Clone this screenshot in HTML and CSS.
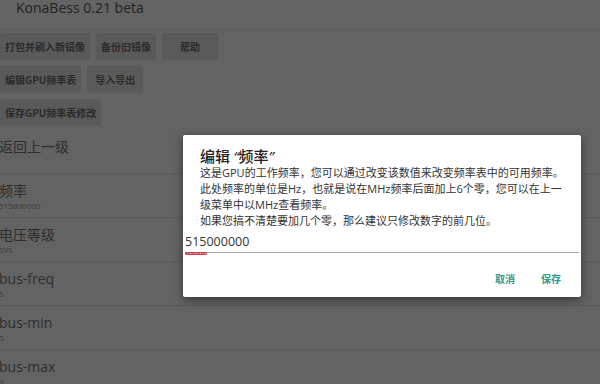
FILE: index.html
```html
<!DOCTYPE html>
<html lang="zh-CN">
<head>
<meta charset="utf-8">
<title>KonaBess</title>
<link rel="stylesheet" href="styles.css">
</head>
<body>
<div class="app">
  <header class="appbar"><span class="appbar-title">KonaBess 0.21 beta</span></header>
  <div class="actions">
    <div class="action-row">
      <button class="btn">打包并刷入新镜像</button>
      <button class="btn">备份旧镜像</button>
      <button class="btn">帮助</button>
    </div>
    <div class="action-row">
      <button class="btn">编辑GPU频率表</button>
      <button class="btn">导入导出</button>
    </div>
    <div class="action-row">
      <button class="btn">保存GPU频率表修改</button>
    </div>
  </div>
  <ul class="list">
    <li class="item"><div class="item-title">返回上一级</div><div class="item-sub"></div></li>
    <li class="item"><div class="item-title">频率</div><div class="item-sub">515000000</div></li>
    <li class="item"><div class="item-title">电压等级</div><div class="item-sub">SVS</div></li>
    <li class="item"><div class="item-title">bus-freq</div><div class="item-sub">5</div></li>
    <li class="item"><div class="item-title">bus-min</div><div class="item-sub">5</div></li>
    <li class="item"><div class="item-title">bus-max</div><div class="item-sub">9</div></li>
  </ul>
</div>
<div class="dialog">
  <div class="dialog-title">编辑 <span class="q">“</span>频率<span class="q">”</span></div>
  <div class="dialog-msg">这是GPU的工作频率，您可以通过改变该数值来改变频率表中的可用频率。<br>此处频率的单位是Hz，也就是说在MHz频率后面加上6个零，您可以在上一级菜单中以MHz查看频率。<br>如果您搞不清楚要加几个零，那么建议只修改数字的前几位。</div>
  <div class="edit"><span class="edit-text">515000000</span><span class="spell"></span></div>
  <div class="dialog-actions">
    <button class="dlg-btn">取消</button>
    <button class="dlg-btn">保存</button>
  </div>
</div>
</body>
</html>
```

FILE: styles.css
```css
* { box-sizing: border-box; }
html, body {
  margin: 0;
  padding: 0;
  width: 600px;
  height: 384px;
  overflow: hidden;
  background: #636363;
  font-family: "Open Sans", "Noto Sans CJK SC", sans-serif;
}
.app {
  display: flex;
  flex-direction: column;
}
.appbar {
  height: 30px;
  background: #646464;
  border-bottom: 1px solid #5c5c5c;
  padding-left: 16px;
}
.appbar-title {
  font-size: 14px;
  line-height: 15px;
  color: #232323;
  display: block;
}
.actions {
  display: flex;
  flex-direction: column;
  gap: 7px;
  padding-top: 3px;
}
.action-row {
  display: flex;
  gap: 6px;
}
.btn {
  height: 26px;
  min-width: 56px;
  padding: 0 5px;
  border: none;
  border-radius: 2px;
  background: #5a5a5a;
  color: #2b2b2b;
  font-family: "Noto Sans CJK SC", "Open Sans", sans-serif;
  font-weight: 700;
  font-size: 10px;
  box-shadow: 0 1px 1px rgba(0,0,0,0.08);
}
.list {
  list-style: none;
  margin: 5px 0 0 -1px;
  padding: 0;
}
.item {
  height: 44px;
  padding-top: 7px;
  border-bottom: 1px solid #5a5a5a;
}
.item-title {
  font-size: 14px;
  line-height: 19px;
  color: #2e2e2e;
}
.item-sub {
  font-size: 8px;
  line-height: 11px;
  height: 11px;
  color: #3a3a3a;
}
.dialog {
  position: absolute;
  left: 183px;
  top: 135px;
  width: 398px;
  height: 162px;
  background: #ffffff;
  border-radius: 2px;
  box-shadow: 0 3px 10px rgba(0,0,0,0.45);
  display: flex;
  flex-direction: column;
}
.dialog-title {
  padding: 12px 15px 0 17px;
  font-family: "Noto Sans CJK SC", sans-serif;
  font-size: 15px;
  font-weight: 500;
  line-height: 17px;
  color: #222222;
}
.q {
  font-family: "Open Sans", sans-serif;
  font-style: italic;
  font-weight: 400;
}
.dialog-msg {
  padding: 0 15px 0 17px;
  font-size: 11px;
  line-height: 16px;
  color: #333333;
}
.edit {
  position: relative;
  margin: 4px 2px 0 2px;
  border-bottom: 1px solid #a8a8a8;
  padding-bottom: 1px;
}
.edit-text {
  font-size: 12.5px;
  line-height: 18px;
  color: #333333;
  display: block;
}
.spell {
  position: absolute;
  left: 0;
  bottom: -3px;
  width: 22px;
  height: 3px;
  border: 1px solid #c8404e;
  border-radius: 1px;
  background: repeating-linear-gradient(90deg, #d7707a 0 4px, #f3c8cc 4px 5px);
}
.dialog-actions {
  display: flex;
  justify-content: flex-end;
  gap: 2px;
  padding: 0 8px 0 0;
  margin-top: auto;
  margin-bottom: 10px;
}
.dlg-btn {
  border: none;
  background: transparent;
  padding: 0 12px;
  height: 18px;
  font-family: "Noto Sans CJK SC", sans-serif;
  font-weight: 700;
  font-size: 10px;
  color: #2f9a8e;
}
```
